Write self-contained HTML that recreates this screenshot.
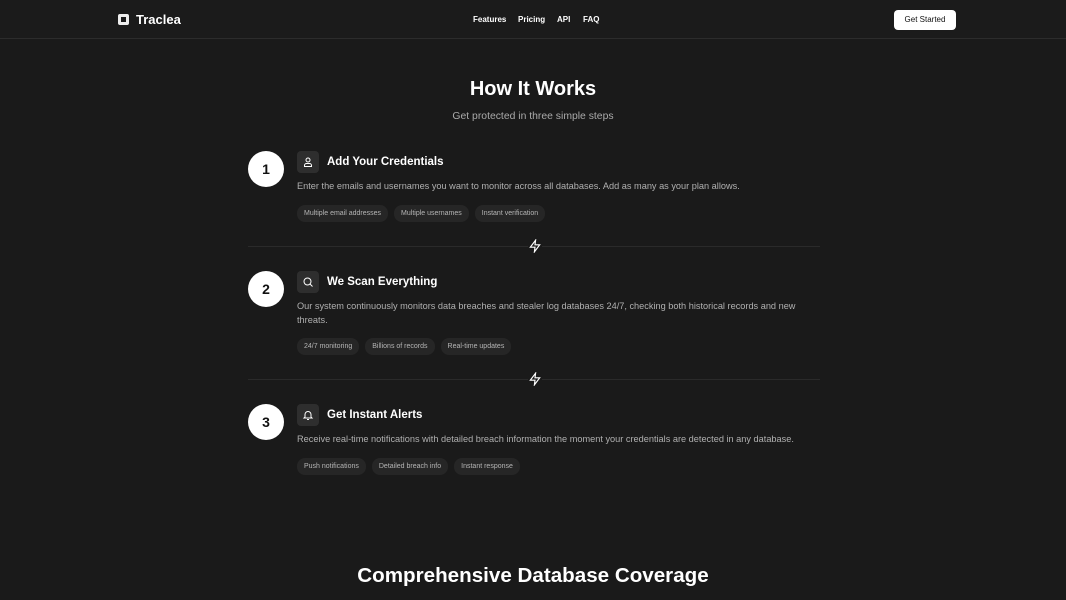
<!DOCTYPE html>
<html><head><style>
*{margin:0;padding:0;box-sizing:border-box}
body{width:1066px;height:600px;overflow:hidden;background:#1a1a1a;color:#fff;font-family:"Liberation Sans",sans-serif;position:relative}
.nav{position:absolute;top:0;left:0;width:1066px;height:39px;border-bottom:1px solid #2c2c2c;background:#1b1b1b}
.a{position:absolute}
.logo{left:118px;top:14px;width:11px;height:11px;background:#eee;border-radius:2px}
.logo:after{content:"";position:absolute;left:3px;top:3px;width:5px;height:5px;background:#1b1b1b}
.brand{left:136px;top:12px;font-size:13px;font-weight:bold}
.links{top:15px;font-size:8px;font-weight:bold}
.btn{left:894px;top:10px;width:62px;height:20px;background:#fff;color:#111;border-radius:4px;font-size:8px;text-align:center;line-height:20px}
h1{position:absolute;left:0;width:1066px;text-align:center;font-size:20px;font-weight:bold}
.sub{left:0;width:1066px;text-align:center;top:111px;font-size:10.4px;color:#aaa}
.num{width:36px;height:36px;border-radius:50%;background:#fff;color:#111;font-size:14px;font-weight:bold;text-align:center;line-height:36px;left:248px}
.ic{width:22px;height:22px;border-radius:4px;background:#2e2e2e;left:297px}
.ic svg{position:absolute;left:5px;top:5px}
.t{left:327px;font-size:11.5px;font-weight:bold}
.d{left:297px;font-size:9.2px;color:#b0b0b0;width:515px;line-height:13.5px}
.tags{left:297px;display:flex;gap:6px}
.tag{height:17px;border-radius:8px;background:#262626;color:#b5b5b5;font-size:7px;line-height:17px;padding:0 7px}
.hr{left:248px;width:572px;height:1px;background:#2a2a2a}
.bolt{left:528px;width:14px;height:14px;background:#1a1a1a}
</style></head><body>
<div class="nav">
<div class="a logo"></div><div class="a brand">Traclea</div>
<div class="a links" style="left:473px">Features</div>
<div class="a links" style="left:518px">Pricing</div>
<div class="a links" style="left:557px">API</div>
<div class="a links" style="left:583px">FAQ</div>
<div class="a btn">Get Started</div>
</div>
<h1 style="top:78px">How It Works</h1>
<div class="a sub">Get protected in three simple steps</div>

<div class="a num" style="top:151px">1</div>
<div class="a ic" style="top:151px"><svg width="12" height="12" viewBox="0 0 24 24" fill="none" stroke="#fff" stroke-width="2"><circle cx="12" cy="8" r="4"/><path d="M5 21v-2a4 4 0 0 1 4-4h6a4 4 0 0 1 4 4v2z"/></svg></div>
<div class="a t" style="top:156px">Add Your Credentials</div>
<div class="a d" style="top:180px">Enter the emails and usernames you want to monitor across all databases. Add as many as your plan allows.</div>
<div class="a tags" style="top:205px"><div class="tag">Multiple email addresses</div><div class="tag">Multiple usernames</div><div class="tag">Instant verification</div></div>
<div class="a hr" style="top:246px"></div>
<div class="a bolt" style="top:239px"><svg width="14" height="14" viewBox="0 0 24 24" fill="none" stroke="#fff" stroke-width="2"><path d="M13 2L4 14h8l-1 8 9-12h-8z"/></svg></div>

<div class="a num" style="top:271px">2</div>
<div class="a ic" style="top:271px"><svg width="12" height="12" viewBox="0 0 24 24" fill="none" stroke="#fff" stroke-width="2"><circle cx="11" cy="11" r="7"/><path d="M21 21l-5-5"/></svg></div>
<div class="a t" style="top:276px">We Scan Everything</div>
<div class="a d" style="top:300px">Our system continuously monitors data breaches and stealer log databases 24/7, checking both historical records and new threats.</div>
<div class="a tags" style="top:338px"><div class="tag">24/7 monitoring</div><div class="tag">Billions of records</div><div class="tag">Real-time updates</div></div>
<div class="a hr" style="top:379px"></div>
<div class="a bolt" style="top:372px"><svg width="14" height="14" viewBox="0 0 24 24" fill="none" stroke="#fff" stroke-width="2"><path d="M13 2L4 14h8l-1 8 9-12h-8z"/></svg></div>

<div class="a num" style="top:404px">3</div>
<div class="a ic" style="top:404px"><svg width="12" height="12" viewBox="0 0 24 24" fill="none" stroke="#fff" stroke-width="2"><path d="M6 16V11a6 6 0 0 1 12 0v5l2 2H4z"/><path d="M10 21h4"/></svg></div>
<div class="a t" style="top:409px">Get Instant Alerts</div>
<div class="a d" style="top:433px">Receive real-time notifications with detailed breach information the moment your credentials are detected in any database.</div>
<div class="a tags" style="top:458px"><div class="tag">Push notifications</div><div class="tag">Detailed breach info</div><div class="tag">Instant response</div></div>

<h1 style="top:564px;font-size:20.6px">Comprehensive Database Coverage</h1>
</body></html>
